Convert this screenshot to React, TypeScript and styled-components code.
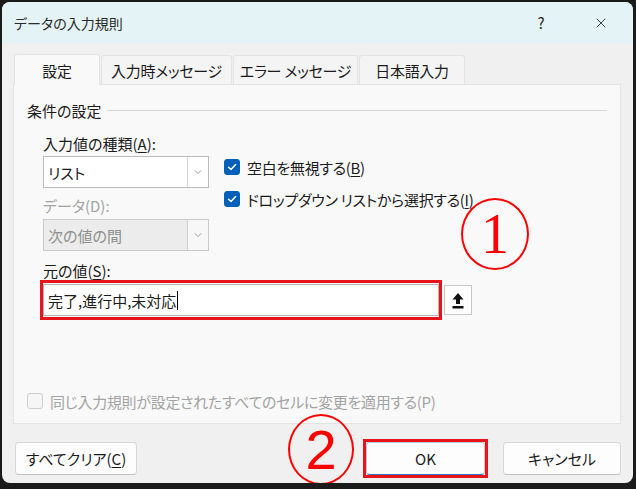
import React from "react";
import styled, { createGlobalStyle } from "styled-components";
import { X, ChevronDown } from "lucide-react";

const GlobalStyle = createGlobalStyle`
  html, body {
    margin: 0;
    padding: 0;
    background: #1b1b1b;
  }
  body {
    font-family: "Noto Sans CJK JP", "Noto Sans", sans-serif;
    font-feature-settings: "palt";
    color: #1b1b1b;
  }
  u {
    text-underline-offset: 2px;
    text-decoration-thickness: 1px;
  }
`;

const Screen = styled.div`
  width: 636px;
  height: 489px;
  box-sizing: border-box;
  padding: 2px 3px 6px 2px;
  background: #1b1b1b;
`;

const Window = styled.div`
  position: relative;
  height: 100%;
  display: flex;
  flex-direction: column;
  background: #f0f0f0;
  border-radius: 8px;
  overflow: hidden;
`;

const TitleBar = styled.div`
  height: 41px;
  flex: none;
  display: flex;
  align-items: center;
  padding-left: 12px;
  background: #e4f3f5;
  font-size: 14px;
  color: #2a2a2a;
`;

const Title = styled.div`
  flex: 1;
`;

const TitleButton = styled.div`
  width: 60px;
  height: 41px;
  display: flex;
  align-items: center;
  justify-content: center;
  font-size: 15px;
  color: #222;
  &:last-child {
    margin-right: 2px;
  }
`;

const Body = styled.div`
  flex: 1;
  display: flex;
  flex-direction: column;
  padding: 10px 12px 8px 11px;
`;

const TabRow = styled.div`
  display: flex;
  align-items: flex-end;
  gap: 1px;
  padding-left: 1px;
  height: 31px;
`;

const Tab = styled.div<{ $active?: boolean; $w: number }>`
  width: ${(p) => p.$w}px;
  height: ${(p) => (p.$active ? 31 : 29)}px;
  box-sizing: border-box;
  display: flex;
  align-items: center;
  justify-content: center;
  font-size: 15px;
  letter-spacing: -0.3px;
  background: ${(p) => (p.$active ? "#f9f9f9" : "#f4f4f4")};
  border: 1px solid #e3e3e3;
  border-bottom: none;
  border-radius: 3px 3px 0 0;
  ${(p) => (p.$active ? "margin-bottom: -1px; position: relative; z-index: 1;" : "")}
`;

const Panel = styled.div`
  height: 340px;
  box-sizing: border-box;
  display: flex;
  flex-direction: column;
  background: #f9f9f9;
  border: 1px solid #e3e3e3;
  padding: 15px 13px 12px 13px;
`;

const Legend = styled.div`
  height: 20px;
  display: flex;
  align-items: center;
  font-size: 15px;
  &::after {
    content: "";
    flex: 1;
    margin-left: 6px;
    border-top: 1px solid #d8d8d8;
  }
`;

const Fields = styled.div`
  padding-left: 16px;
  display: flex;
  flex-direction: column;
`;

const TopGrid = styled.div`
  display: grid;
  grid-template-columns: 166px 1fr;
  column-gap: 15px;
`;

const Column = styled.div`
  display: flex;
  flex-direction: column;
`;

const Label = styled.div<{ $disabled?: boolean; $top: number }>`
  height: 20px;
  margin-top: ${(p) => p.$top}px;
  display: flex;
  align-items: center;
  font-size: 15px;
  color: ${(p) => (p.$disabled ? "#a3a3a3" : "#1b1b1b")};
`;

const Combo = styled.div<{ $disabled?: boolean; $top: number }>`
  height: 32px;
  margin-top: ${(p) => p.$top}px;
  box-sizing: border-box;
  display: flex;
  border: 1px solid ${(p) => (p.$disabled ? "#c9c9c9" : "#bcbcbc")};
  background: ${(p) => (p.$disabled ? "#ececec" : "#ffffff")};
  color: ${(p) => (p.$disabled ? "#8e8e8e" : "#1b1b1b")};
  font-size: 15px;
`;

const ComboValue = styled.div`
  flex: 1;
  display: flex;
  align-items: center;
  padding-left: 4px;
`;

const ComboArrow = styled.div<{ $disabled?: boolean }>`
  width: 20px;
  display: flex;
  align-items: center;
  justify-content: center;
  border-left: 1px solid #d2d2d2;
  background: ${(p) => (p.$disabled ? "#f7f7f7" : "#ffffff")};
  color: #6a6a6a;
`;

const Checks = styled.div`
  display: flex;
  flex-direction: column;
  gap: 12px;
  padding-top: 37px;
`;

const CheckRow = styled.div<{ $disabled?: boolean }>`
  height: 20px;
  display: flex;
  align-items: center;
  gap: 7px;
  font-size: 15px;
  letter-spacing: -0.3px;
  white-space: nowrap;
  color: ${(p) => (p.$disabled ? "#a3a3a3" : "#1b1b1b")};
`;

const Box = styled.div<{ $checked?: boolean }>`
  width: 16px;
  height: 16px;
  flex: none;
  box-sizing: border-box;
  border-radius: 3px;
  display: flex;
  align-items: center;
  justify-content: center;
  background: ${(p) => (p.$checked ? "#005fb8" : "#f6f6f6")};
  border: 1px solid ${(p) => (p.$checked ? "#005fb8" : "#cfcfcf")};
`;

const SourceRow = styled.div`
  display: flex;
  align-items: center;
  gap: 2px;
  margin-left: -3px;
`;

const RedFrame = styled.div`
  border: 3px solid #e8141b;
  padding: 1px 0;
`;

const SourceInput = styled.div`
  width: 396px;
  height: 32px;
  box-sizing: border-box;
  display: flex;
  align-items: center;
  padding-left: 4px;
  background: #ffffff;
  border: 1px solid #b4b4b4;
  font-size: 15px;
`;

const Caret = styled.span`
  display: inline-block;
  width: 1px;
  height: 19px;
  margin-left: 1px;
  background: #000;
`;

const RangeButton = styled.div`
  width: 28px;
  height: 30px;
  box-sizing: border-box;
  display: flex;
  align-items: center;
  justify-content: center;
  background: #fdfdfd;
  border: 1px solid #c6c6c6;
`;

const Spacer = styled.div`
  flex: 1;
`;

const Footer = styled.div`
  margin-top: 17px;
  height: 34px;
  display: flex;
  align-items: center;
  padding-left: 2px;
`;

const Button = styled.div<{ $w: number; $default?: boolean }>`
  width: ${(p) => p.$w}px;
  height: 33px;
  box-sizing: border-box;
  display: flex;
  align-items: center;
  justify-content: center;
  background: #fdfdfd;
  border: 1px solid ${(p) => (p.$default ? "#b9c9dc" : "#d6d6d6")};
  border-bottom-color: ${(p) => (p.$default ? "#2b73c4" : "#c2c2c2")};
  border-radius: 4px;
  font-size: 15px;
`;

const OkFrame = styled.div`
  border: 3px solid #e8141b;
  margin-right: 15px;
`;

const Marker = styled.div<{ $x: number; $y: number; $w: number; $h: number }>`
  position: absolute;
  left: ${(p) => p.$x}px;
  top: ${(p) => p.$y}px;
  width: ${(p) => p.$w}px;
  height: ${(p) => p.$h}px;
  box-sizing: border-box;
  border: 2px solid #f00;
  border-radius: 50%;
  display: flex;
  align-items: center;
  justify-content: center;
  color: #f00;
`;

const MarkerDigit = styled.span<{ $serif?: boolean }>`
  font-family: ${(p) => (p.$serif ? '"Liberation Serif", serif' : '"Liberation Sans", sans-serif')};
  font-size: ${(p) => (p.$serif ? 56 : 56)}px;
  line-height: 1;
`;

function Check() {
  return (
    <svg width="12" height="12" viewBox="0 0 12 12">
      <path d="M2.6 6.2 L5 8.5 L9.6 3.6" fill="none" stroke="#fff" strokeWidth="1.5" strokeLinecap="round" strokeLinejoin="round" />
    </svg>
  );
}

function RangeIcon() {
  return (
    <svg width="12" height="17" viewBox="0 0 12 17">
      <polygon points="6,1 11.5,7.5 8,7.5 8,12 4,12 4,7.5 0.5,7.5" fill="#111" />
      <rect x="0.5" y="14" width="11" height="2.5" fill="#111" />
    </svg>
  );
}

export default function App() {
  return (
    <Screen>
      <GlobalStyle />
      <Window>
        <TitleBar>
          <Title>データの入力規則</Title>
          <TitleButton>?</TitleButton>
          <TitleButton>
            <X size={16} strokeWidth={1.3} />
          </TitleButton>
        </TitleBar>
        <Body>
          <TabRow>
            <Tab $active $w={86}>設定</Tab>
            <Tab $w={131}>入力時メッセージ</Tab>
            <Tab $w={125}>エラー メッセージ</Tab>
            <Tab $w={106}>日本語入力</Tab>
          </TabRow>
          <Panel>
            <Legend>条件の設定</Legend>
            <Fields>
              <TopGrid>
                <Column>
                  <Label $top={13}>
                    入力値の種類(<u>A</u>):
                  </Label>
                  <Combo $top={3}>
                    <ComboValue>リスト</ComboValue>
                    <ComboArrow>
                      <ChevronDown size={12} strokeWidth={1.3} />
                    </ComboArrow>
                  </Combo>
                  <Label $disabled $top={7}>
                    データ(D):
                  </Label>
                  <Combo $disabled $top={4}>
                    <ComboValue>次の値の間</ComboValue>
                    <ComboArrow $disabled>
                      <ChevronDown size={12} strokeWidth={1.3} />
                    </ComboArrow>
                  </Combo>
                </Column>
                <Checks>
                  <CheckRow>
                    <Box $checked>
                      <Check />
                    </Box>
                    <span>
                      空白を無視する(<u>B</u>)
                    </span>
                  </CheckRow>
                  <CheckRow>
                    <Box $checked>
                      <Check />
                    </Box>
                    <span>
                      ドロップダウン リストから選択する(<u>I</u>)
                    </span>
                  </CheckRow>
                </Checks>
              </TopGrid>
              <Label $top={9}>
                元の値(<u>S</u>):
              </Label>
              <SourceRow>
                <RedFrame>
                  <SourceInput>
                    完了,進行中,未対応
                    <Caret />
                  </SourceInput>
                </RedFrame>
                <RangeButton>
                  <RangeIcon />
                </RangeButton>
              </SourceRow>
            </Fields>
            <Spacer />
            <CheckRow $disabled>
              <Box />
              <span>同じ入力規則が設定されたすべてのセルに変更を適用する(P)</span>
            </CheckRow>
          </Panel>
          <Footer>
            <Button $w={122}>
              すべてクリア(<u>C</u>)
            </Button>
            <Spacer />
            <OkFrame>
              <Button $w={119} $default>
                OK
              </Button>
            </OkFrame>
            <Button $w={118}>キャンセル</Button>
          </Footer>
        </Body>
        <Marker $x={459} $y={196} $w={68} $h={72}>
          <MarkerDigit $serif>1</MarkerDigit>
        </Marker>
        <Marker $x={286} $y={412} $w={66} $h={71}>
          <MarkerDigit>2</MarkerDigit>
        </Marker>
      </Window>
    </Screen>
  );
}
